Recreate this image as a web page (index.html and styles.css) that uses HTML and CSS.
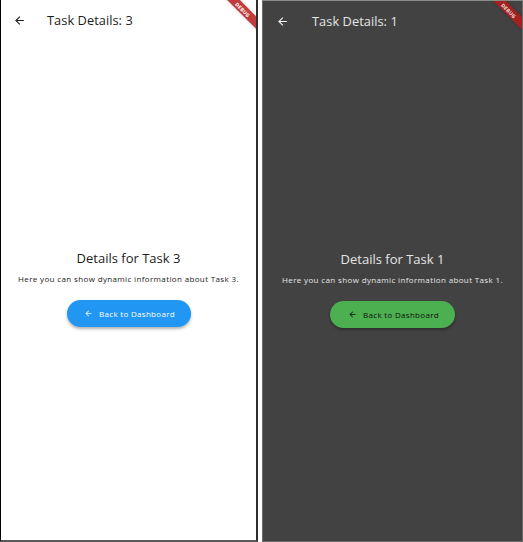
FILE: index.html
```html
<!DOCTYPE html>
<html>
<head>
<meta charset="utf-8">
<link rel="stylesheet" href="styles.css">
</head>
<body>
<div class="screens">
  <div class="phone light">
    <div class="banner"><span>DEBUG</span></div>
    <header class="appbar">
      <svg class="back" viewBox="0 0 24 24"><path d="M20 11H7.83l5.59-5.59L12 4l-8 8 8 8 1.41-1.41L7.83 13H20v-2z"/></svg>
      <h1 class="title">Task Details: 3</h1>
    </header>
    <main class="content">
      <h2 class="heading">Details for Task 3</h2>
      <p class="info">Here you can show dynamic information about Task 3.</p>
      <button class="btn blue">
        <svg class="btn-icon" viewBox="0 0 24 24"><path d="M20 11H7.83l5.59-5.59L12 4l-8 8 8 8 1.41-1.41L7.83 13H20v-2z"/></svg>
        <span>Back to Dashboard</span>
      </button>
    </main>
  </div>
  <div class="phone dark">
    <div class="banner"><span>DEBUG</span></div>
    <header class="appbar">
      <svg class="back" viewBox="0 0 24 24"><path d="M20 11H7.83l5.59-5.59L12 4l-8 8 8 8 1.41-1.41L7.83 13H20v-2z"/></svg>
      <h1 class="title">Task Details: 1</h1>
    </header>
    <main class="content">
      <h2 class="heading">Details for Task 1</h2>
      <p class="info">Here you can show dynamic information about Task 1.</p>
      <button class="btn green">
        <svg class="btn-icon" viewBox="0 0 24 24"><path d="M20 11H7.83l5.59-5.59L12 4l-8 8 8 8 1.41-1.41L7.83 13H20v-2z"/></svg>
        <span>Back to Dashboard</span>
      </button>
    </main>
  </div>
</div>
</body>
</html>
```

FILE: styles.css
```css
* { box-sizing: border-box; }
html, body { margin: 0; padding: 0; background: #fff; }
body { font-family: "Open Sans", "Noto Sans", sans-serif; }
.screens { display: flex; width: 523px; height: 542px; }
.phone {
  position: relative;
  overflow: hidden;
  display: flex;
  flex-direction: column;
  height: 542px;
}
.phone.light {
  width: 258px;
  background: #fff;
  color: #1d1b20;
  border-left: 1px solid #000;
  border-right: 2px solid #2e2e2e;
  border-bottom: 2px solid #5a5a5a;
}
.phone.dark {
  width: 261px;
  margin-left: 4px;
  background: #424242;
  color: #e6e6e6;
  border: 1px solid #6a6a6a;
  border-top-color: #8a8a8a;
}
.appbar {
  display: flex;
  align-items: center;
  height: 40px;
  padding-left: 12px;
}
.dark .appbar { padding-left: 13px; }
.back { width: 13px; height: 13px; }
.light .back { fill: #1d1b20; }
.dark .back { fill: #f5f5f5; }
.title {
  margin: 0 0 0 21px;
  font-size: 12.8px;
  font-weight: 400;
  letter-spacing: 0.05px;
}
.dark .title { margin-left: 23px; }
.content {
  flex: 1;
  display: flex;
  flex-direction: column;
  align-items: center;
  justify-content: center;
  padding-bottom: 4px;
}
.heading {
  margin: 0;
  font-size: 13px;
  font-weight: 400;
}
.info {
  margin: 6px 0 0;
  font-size: 8px;
  letter-spacing: 0.36px;
}
.btn {
  margin-top: 16px;
  display: flex;
  align-items: center;
  justify-content: center;
  gap: 6px;
  height: 27px;
  width: 124px;
  border: none;
  border-radius: 14px;
  font-family: inherit;
  font-size: 8px;
  letter-spacing: 0.3px;
  padding: 0 0 0 2px;
  box-shadow: 0 2px 3px rgba(0,0,0,0.3);
}
.btn.blue { background: #2196f3; color: #fff; }
.btn.green { background: #4caf50; color: #111; width: 125px; }
.btn-icon { width: 9px; height: 9px; fill: currentColor; }
.banner {
  position: absolute;
  top: 5px;
  right: -14px;
  width: 54px;
  height: 9px;
  background: #b71c1c;
  opacity: 0.85;
  transform: rotate(45deg);
  display: flex;
  align-items: center;
  justify-content: center;
  box-shadow: 0 0 3px rgba(0,0,0,0.25);
}
.banner span { color: #fff; font-size: 5px; font-weight: 700; letter-spacing: 0.2px; }
```
